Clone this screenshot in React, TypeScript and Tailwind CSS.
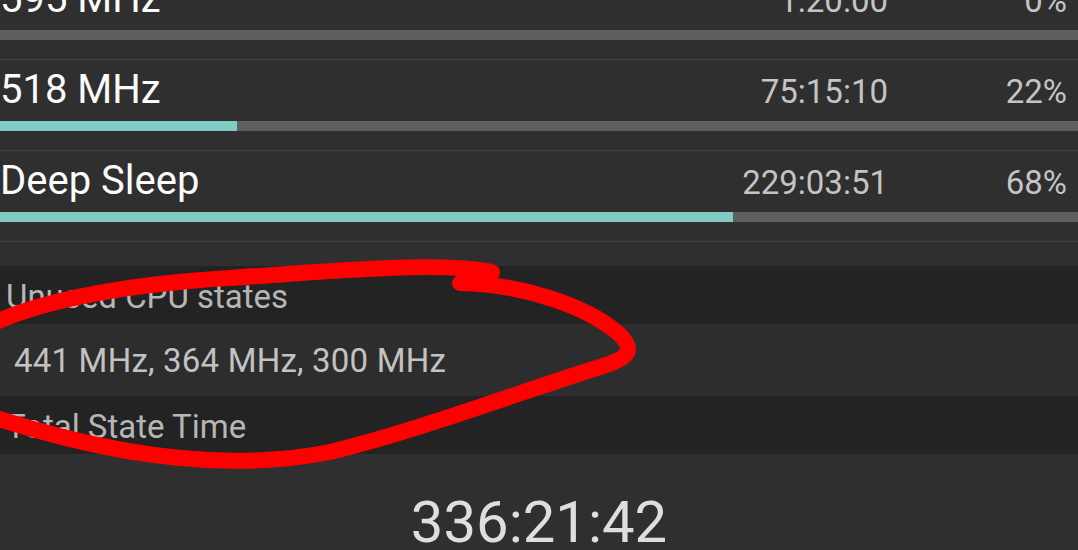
import React from "react";

type Row = { name: string; time: string; pct: number };

const rows: Row[] = [
  { name: "595 MHz", time: "1:20:00", pct: 0 },
  { name: "518 MHz", time: "75:15:10", pct: 22 },
  { name: "Deep Sleep", time: "229:03:51", pct: 68 },
];

function StateRow({ row }: { row: Row }) {
  return (
    <div className="border-t border-[#404040] pt-[6px] pb-[19px]">
      <div className="flex items-baseline h-[48px] leading-[48px]">
        <div className="flex-1 text-[40px] text-[#fbfbfb]">{row.name}</div>
        <div className="text-[33px] text-[#c4c4c4] text-right">{row.time}</div>
        <div className="w-[190px] pr-[11px] text-[33px] text-[#c4c4c4] text-right">
          {row.pct}%
        </div>
      </div>
      <div className="mt-[7px] h-[10px] bg-[#5f5f5f]">
        <div className="h-full bg-[#80cbc4]" style={{ width: `${row.pct}%` }} />
      </div>
    </div>
  );
}

export default function App() {
  return (
    <div
      className="relative w-[1078px] h-[550px] overflow-hidden bg-[#2f2f2f]"
      style={{ fontFamily: "Roboto, 'Noto Sans', sans-serif" }}
    >
      <div className="-mt-[32px]">
        {rows.map((r) => (
          <StateRow key={r.name} row={r} />
        ))}
        <div className="border-t border-[#404040] h-[25px]" />
        <div className="h-[58px] pt-[4px] leading-[54px] pl-[6px] bg-[#232323] text-[33px] text-[#b6b6b6]">
          Unused CPU states
        </div>
        <div className="h-[72px] pt-[2px] leading-[70px] pl-[14px] bg-[#2d2d2d] text-[33px] tracking-[0.2px] text-[#c2c2c2]">
          441 MHz, 364 MHz, 300 MHz
        </div>
        <div className="h-[58px] pt-[4px] leading-[54px] pl-[6px] bg-[#232323] text-[33px] text-[#b6b6b6]">
          Total State Time
        </div>
        <div className="pt-[25px] text-center text-[58px] text-[#dedede] leading-normal">
          336:21:42
        </div>
      </div>

      <svg
        className="absolute inset-0 pointer-events-none"
        width="1078"
        height="550"
        viewBox="0 0 1078 550"
      >
        <path
          d="M -10 325 C 30 305, 110 285, 230 278 C 330 271, 440 261, 492 272"
          fill="none"
          stroke="#ff0000"
          strokeWidth="16"
          strokeLinecap="round"
        />
        <path
          d="M 460 283 C 520 284, 585 305, 618 333 C 636 350, 630 358, 600 367 C 520 392, 420 430, 330 452 C 240 470, 130 462, -10 416"
          fill="none"
          stroke="#ff0000"
          strokeWidth="16"
          strokeLinecap="round"
        />
      </svg>
    </div>
  );
}
